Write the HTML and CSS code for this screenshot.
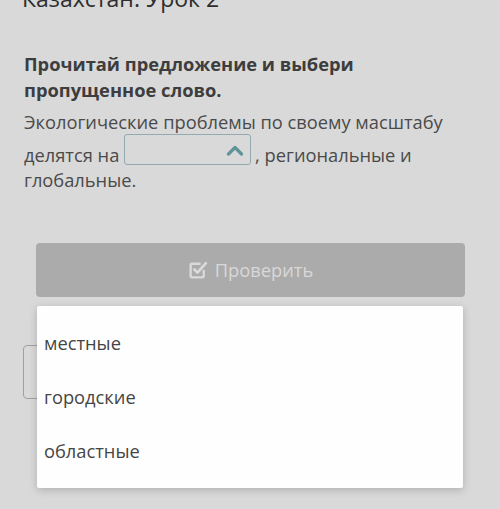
FILE: index.html
```html
<!DOCTYPE html>
<html lang="ru">
<head>
<meta charset="utf-8">
<link rel="stylesheet" href="styles.css">
</head>
<body>
<div class="page">
  <h1 class="title">Казахстан. Урок 2</h1>
  <h2 class="task">Прочитай предложение и выбери пропущенное слово.</h2>
  <p class="sentence">Экологические проблемы по своему масштабу делятся на <span class="select"><span class="select-inner"><svg class="chev" width="18" height="12" viewBox="0 0 18 12"><path d="M2.5 10 L9 3.5 L15.5 10" fill="none" stroke="#5f9498" stroke-width="3.2" stroke-linecap="round" stroke-linejoin="round"/></svg></span></span>, региональные и глобальные.</p>
  <div class="actions">
    <button class="check"><svg class="box" width="21" height="21" viewBox="0 0 20 20"><path d="M15 10.5 V16 a1.5 1.5 0 0 1 -1.5 1.5 H4 a1.5 1.5 0 0 1 -1.5 -1.5 V6 A1.5 1.5 0 0 1 4 4.5 H12" fill="none" stroke="#dadada" stroke-width="2.2"/><path d="M6 10 L9 13 L17 4" fill="none" stroke="#dadada" stroke-width="2.6" stroke-linecap="round" stroke-linejoin="round"/></svg>Проверить</button>
    <div class="next"></div>
  </div>
  <ul class="menu">
    <li>местные</li>
    <li>городские</li>
    <li>областные</li>
  </ul>
</div>
</body>
</html>
```
FILE: styles.css
```css
html, body {
  margin: 0;
  padding: 0;
  background: #d9d9d9;
  height: 100%;
  overflow: hidden;
}
body {
  font-family: "Open Sans", "Noto Sans", sans-serif;
}
.page {
  position: relative;
  display: flow-root;
  padding: 0 24px;
}
.title {
  margin: -18px 0 0 -2px;
  font-size: 23px;
  line-height: 32px;
  font-weight: 400;
  color: #2e2e2e;
}
.task {
  margin: 37px 0 0;
  font-size: 18.3px;
  line-height: 26px;
  font-weight: 700;
  color: #3d3d3d;
}
.sentence {
  margin: 6px 0 0;
  font-size: 18.3px;
  line-height: 25px;
  color: #4a4a4a;
}
.select {
  display: inline-block;
  overflow: hidden;
  box-sizing: border-box;
  width: 127px;
  height: 31px;
  margin-right: 4px;
  border: 1.5px solid #93abb0;
  border-radius: 3px;
  vertical-align: -3px;
}
.select-inner {
  display: flex;
  justify-content: flex-end;
  align-items: center;
  height: 100%;
  padding-right: 6px;
}
.actions {
  margin: 51px 11px 0 12px;
  display: flex;
  flex-direction: column;
  gap: 48px;
}
.check {
  height: 54px;
  border: none;
  border-radius: 4px;
  background: #ababab;
  color: #d8d8d8;
  font-family: "Open Sans", sans-serif;
  font-size: 18.3px;
  display: flex;
  align-items: center;
  justify-content: center;
  gap: 6px;
  padding: 0 0 2px;
}
.box {
  margin-top: 1px;
}
.next {
  height: 54px;
  margin-left: -13px;
  box-sizing: border-box;
  border: 1.5px solid #a0a0a0;
  border-radius: 4px;
  width: 420px;
}
.menu {
  position: absolute;
  left: 37px;
  top: 306px;
  width: 426px;
  margin: 0;
  padding: 10px 0;
  list-style: none;
  background: #fefefe;
  border-radius: 2px;
  box-shadow: 0 2px 8px rgba(0,0,0,0.2);
}
.menu li {
  height: 54px;
  line-height: 54px;
  padding-left: 7px;
  font-size: 18.3px;
  color: #454545;
}
```
